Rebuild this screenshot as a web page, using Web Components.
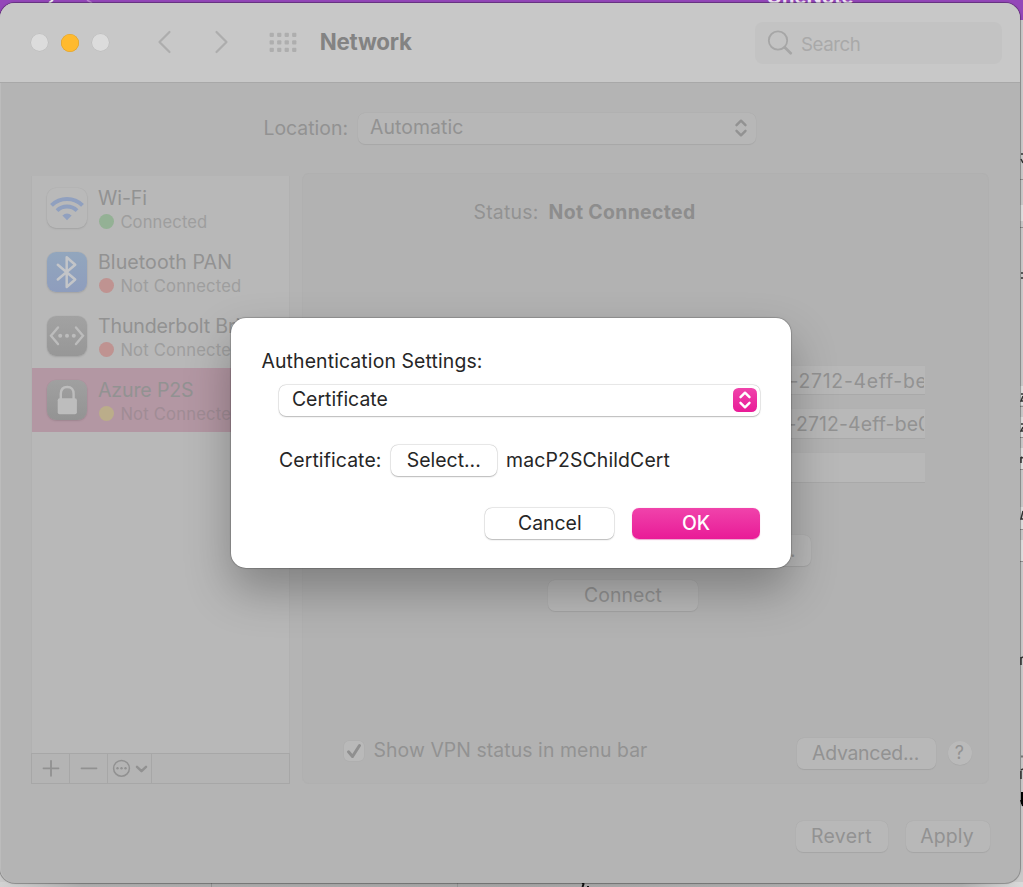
<!DOCTYPE html>
<html lang="en">
<head>
<meta charset="utf-8">
<title>Network</title>
<style>
html,body{margin:0;height:100%;overflow:hidden;background:#c9c9c9}
body{font-family:Inter,"Liberation Sans",sans-serif;font-size:19.4px;color:#929292}
</style>
</head>
<body>
<network-app></network-app>
<script>
const define = (name, html, setup) => customElements.define(name, class extends HTMLElement {
  connectedCallback() {
    if (this.shadowRoot) return;
    const t = document.createElement('template');
    t.innerHTML = html;
    this.attachShadow({mode: 'open'}).append(t.content.cloneNode(true));
    if (setup) setup.call(this, this.shadowRoot);
  }
});

/* A single line of text tracked to an exact width. */
define('ui-text', `<style>
:host{display:block;flex:none;white-space:nowrap;line-height:26px;height:26px}
span{display:inline-block;margin-left:.5px}
</style><span></span>`, function (root) {
  const s = root.querySelector('span'), text = this.getAttribute('text'), w = +this.getAttribute('w');
  s.textContent = text;
  if (this.hasAttribute('size')) this.style.fontSize = this.getAttribute('size') + 'px';
  if (this.hasAttribute('weight')) this.style.fontWeight = this.getAttribute('weight');
  this.style.width = w + 'px';
  s.style.letterSpacing = ((w - 1 - s.getBoundingClientRect().width) / text.length) + 'px';
});

define('ui-button', `<style>
:host{display:flex;flex:none;box-sizing:border-box;height:31px;border-radius:7px;align-items:center;justify-content:center;padding-bottom:.5px;
background:#b8b8b8;box-shadow:0 0 0 .5px rgba(0,0,0,.02),0 .7px 1px rgba(0,0,0,.07)}
:host([kind=white]){background:#fff;box-shadow:0 0 0 .6px rgba(0,0,0,.1),0 .8px 1.5px rgba(0,0,0,.24)}
:host([kind=primary]){background:linear-gradient(#f043ab,#e91b97);color:#fff;box-shadow:0 .5px 1px rgba(200,0,120,.35)}
</style><slot></slot>`);

define('ui-select', `<style>
:host{display:flex;flex:none;box-sizing:border-box;height:31px;border-radius:7px;align-items:center;justify-content:space-between;padding:0 3px 0 12px;
background:#b7b7b7;box-shadow:0 0 0 .5px rgba(0,0,0,.02),0 .7px 1px rgba(0,0,0,.06)}
:host([kind=white]){background:#fff;box-shadow:0 0 0 .6px rgba(0,0,0,.1),0 .8px 1.5px rgba(0,0,0,.24)}
i{display:block;width:24px;height:24px;border-radius:5.5px}
:host([kind=white]) i{background:linear-gradient(#f043ab,#e91b97);color:#fff}
slot{display:block;margin-top:-2px}
svg{display:block}
</style><slot></slot><i><svg width="24" height="24" fill="none" stroke="currentColor" stroke-width="2.4" stroke-linecap="round" stroke-linejoin="round"><path d="M7.500 9.200 12 4.700l4.500 4.500M7.500 14.800 12 19.300l4.500-4.500"/></svg></i>`);

define('title-bar', `<style>
:host{display:flex;flex:none;height:79px;box-sizing:border-box;background:#c8c8c8;align-items:center;padding:0 18.500px 0 31px;border-radius:15px 15px 0 0}
b{width:17px;height:17px;border-radius:50%;background:#dcdcdc;margin-right:13.500px;box-shadow:0 0 0 .5px rgba(0,0,0,.07)}
b.y{width:18px;height:18px;margin:0 13px 0 -.3px;background:#ffba2e;box-shadow:inset 0 0 0 .6px #dba02f}
svg{display:block;flex:none}
.s{display:flex;align-items:center;width:247px;height:42px;box-sizing:border-box;border-radius:8px;background:#c3c3c3;margin-left:auto;padding:1px 0 0 13px;color:#a9a9a9}
</style>
<b></b><b class="y"></b><b></b>
<svg style="margin-left:24.500px" width="200" height="32" fill="none"><g stroke="#adadad" stroke-width="2.200" stroke-linecap="round" stroke-linejoin="round"><path d="M22.500 5 12.500 15l10 10M69.500 5l10 10-10 10"/></g>
<g id="d" fill="#aeaeae"></g></svg>
<ui-text style="margin:-1px 0 0 -28px;color:#838383" text="Network" w="93" size="22.300" weight="700"></ui-text>
<div class="s"><svg style="margin-left:-.5px" width="26" height="28" fill="none" stroke="#a6a6a6"><circle cx="11" cy="11.500" r="9.200" stroke-width="1.800"/><path d="m17.700 18.200 6 6" stroke-width="2.700" stroke-linecap="round"/></svg><ui-text style="margin:4px 0 0 7.500px" text="Search" w="60.500" size="18.700"></ui-text></div>`, function (root) {
  let s = '';
  for (let y = 0; y < 3; y++) for (let x = 0; x < 4; x++)
    s += `<rect x="${122.600 + x * 7.500}" y="${5.700 + y * 7.500}" width="4.300" height="4.300" rx="1"/>`;
  root.getElementById('d').innerHTML = s;
});

const glyphs = {
  wifi: ['#b9b9b9', '<g fill="none" stroke="#90a0bf" stroke-width="4"><path d="M4.500 17.300a22 22 0 0 1 31 0M10 22.600a14.500 14.500 0 0 1 20 0"/></g><path d="m20 32.300-4.600-4.700q4.600-4 9.200 0z" fill="#90a0bf"/>'],
  bt: ['linear-gradient(#92a6bd,#8e9dbd)', '<path d="m10.800 12.800 17.400 14.700L19.700 35V5.300l8.500 7.500L10.800 27.500" fill="none" stroke="#c3c5c8" stroke-width="2.500" stroke-linejoin="round" stroke-linecap="round"/>'],
  tb: ['linear-gradient(#a2a2a2,#979797)', '<path d="m11 11.500-7 8.300 7 8.300M29 11.500l7 8.300-7 8.300" fill="none" stroke="#bcbcbc" stroke-width="2.400" stroke-linecap="round"/><g fill="#bcbcbc"><circle cx="13.200" cy="19.800" r="2"/><circle cx="20" cy="19.800" r="2"/><circle cx="26.800" cy="19.800" r="2"/></g>'],
  vpn: ['linear-gradient(#a0a0a0,#939393)', '<rect x="10.700" y="18.300" width="19.200" height="16" rx="2" fill="#bdbdbd"/><path d="M13.800 19v-5.200q0-6.800 6.400-6.800t6.400 6.800V19" fill="none" stroke="#bdbdbd" stroke-width="2.400"/>']
};
define('service-row', `<style>
:host{display:flex;flex:none;height:64px;box-sizing:border-box;padding:12px 0 0 15.300px;overflow:hidden}
:host([selected]){background:#b397a3}
i{display:block;flex:none;width:40px;height:40px;border-radius:9px;box-shadow:0 0 0 .5px rgba(0,0,0,.03),0 1px 2px rgba(0,0,0,.1)}
svg{display:block}
.t{margin:-3px 0 0 10.200px}
.s{display:flex;align-items:center;height:24px;margin-top:-1px;color:#9e9e9e}
:host([selected]) .s{color:#a08c95}
.s u{width:15.400px;height:15.400px;border-radius:50%;margin:-1px 5.500px 0 1.500px;flex:none}
</style><i></i><div class="t"></div>`, function (root) {
  const [bg, svg] = glyphs[this.getAttribute('icon')], g = n => this.getAttribute(n);
  const i = root.querySelector('i');
  i.style.background = bg;
  i.innerHTML = `<svg width="40" height="40">${svg}</svg>`;
  root.querySelector('.t').innerHTML = `<ui-text text="${g('name')}" w="${g('w')}" size="19.600"></ui-text><div class="s"><u style="background:${g('dot')}"></u><ui-text text="${g('status')}" w="${g('sw')}" size="16.600"></ui-text></div>`;
});

define('service-list', `<style>
:host{display:flex;flex-direction:column;width:259px;box-sizing:border-box;padding-top:3px}
.l{flex:1;background:#b8b8b8;border-left:1px solid #b1b1b1;border-right:1px solid #b1b1b1;box-sizing:border-box}
.b{display:flex;height:31px;box-sizing:border-box;border:1.500px solid #a7a7a7;color:#919191}
.b span{box-sizing:border-box;border-right:1px solid #a7a7a7;height:100%}
svg{display:block}
</style>
<div class="l">
<service-row icon="wifi" name="Wi-Fi" w="50" status="Connected" sw="88" dot="#94b195"></service-row>
<service-row icon="bt" name="Bluetooth PAN" w="135" status="Not Connected" sw="122" dot="#bf9391"></service-row>
<service-row icon="tb" name="Thunderbolt Bridge" w="178" status="Not Connected" sw="122" dot="#bf9391"></service-row>
<service-row selected icon="vpn" name="Azure P2S" w="96.500" status="Not Connected" sw="122" dot="#bbad8a"></service-row>
</div>
<div class="b">
<span style="width:37.500px"><svg width="36" height="28" stroke="currentColor" stroke-width="1.800" stroke-linecap="round"><path d="M11.500 14.300h15M19 6.800v15"/></svg></span>
<span style="width:38px"><svg width="37" height="28" stroke="currentColor" stroke-width="1.800" stroke-linecap="round"><path d="M11.500 14.300h15"/></svg></span>
<span style="width:44.500px"><svg width="43" height="28" fill="none" stroke="currentColor" stroke-linecap="round" stroke-linejoin="round"><circle cx="13.500" cy="14.300" r="7.900" stroke-width="1.500"/><path d="M29 12.800l4.500 4.300 4.500-4.300" stroke-width="2.500"/><g fill="currentColor" stroke="none"><circle cx="9.500" cy="14.300" r="1.200"/><circle cx="13.500" cy="14.300" r="1.200"/><circle cx="17.500" cy="14.300" r="1.200"/></g></svg></span>
</div>`);

define('text-field', `<style>
:host{display:block;flex:none;width:369px;height:29.500px;box-sizing:border-box;background:#b8b8b8;border-bottom:1px solid #a9a9a9;overflow:hidden;padding:2px 1px 0 0;box-shadow:0 -.5px #b0b0b0}
div{height:26px;overflow:hidden}
</style><div><slot></slot></div>`);

define('service-panel', `<style>
:host{display:flex;flex-direction:column;background:#b2b2b2;border-radius:7px;width:687px;box-sizing:border-box;box-shadow:inset 0 0 0 1px #b0b0b0}
.st{display:flex;margin:25.500px 0 0 171px;gap:9px}
.f{display:flex;flex-direction:column;gap:14.300px;margin:141px 0 0 254px}
.bot{display:flex;align-items:center;margin:auto 17px 15.500px 42px}
.c{width:20px;height:20px;border-radius:5px;background:#b9b9b9;margin:-5px 9px 0 0;box-shadow:0 0 0 .6px rgba(0,0,0,.03)}
.q{width:24px;height:24px;border-radius:50%;background:#bababa;display:flex;justify-content:center;align-items:center;margin-left:12.500px;box-shadow:0 .5px 1px rgba(0,0,0,.07)}
svg{display:block}
</style>
<div class="st"><ui-text text="Status:" w="66"></ui-text><ui-text text="Not Connected" w="148" weight="700" style="color:#8d8d8d"></ui-text></div>
<div class="f">
<text-field><ui-text text="-2712-4eff-be0" w="152" style="margin:.5px 0 0 233px"></ui-text></text-field>
<text-field><ui-text text="-2712-4eff-be0" w="144" style="margin-left:231px"></ui-text></text-field>
<text-field></text-field>
</div>
<ui-button style="width:256px;margin:52.600px 0 0 253px;justify-content:flex-end;padding-right:15px;box-sizing:border-box"><ui-text text="Authentication Settings..." w="226"></ui-text></ui-button>
<ui-button style="width:150px;margin:13.500px 0 0 246px"><ui-text text="Connect" w="79"></ui-text></ui-button>
<div class="bot"><div class="c"><svg width="20" height="20" fill="none" stroke="#8f8f8f" stroke-width="3" stroke-linecap="round" stroke-linejoin="round"><path d="m4.500 10.800 4 4.700 7-11"/></svg></div>
<ui-text text="Show VPN status in menu bar" w="275" style="margin-top:-5.500px"></ui-text>
<ui-button style="width:139px;margin-left:auto"><ui-text text="Advanced..." w="108" style="margin-left:-1px"></ui-text></ui-button>
<div class="q"><ui-text text="?" w="11.500" size="18"></ui-text></div></div>`);

define('auth-dialog', `<style>
:host{position:absolute;left:231px;top:315px;width:560px;height:250px;box-sizing:border-box;border-radius:15px;background:#fff;color:#262626;
display:flex;flex-direction:column;padding:30px 30.700px 29px 30px;box-shadow:0 0 0 .7px rgba(0,0,0,.14),0 0 2px rgba(0,0,0,.25),0 22px 46px rgba(0,0,0,.29)}
.r{display:flex;align-items:center}
</style>
<ui-text text="Authentication Settings:" w="222"></ui-text>
<ui-select kind="white" style="margin:10.600px 0 0 18.400px"><ui-text text="Certificate" w="97"></ui-text></ui-select>
<div class="r" style="margin:29.800px 0 0 17.500px"><ui-text text="Certificate:" w="103.500" style="margin-top:-1px"></ui-text><ui-button kind="white" style="width:106px;margin:0 8.300px 0 9.300px"><ui-text text="Select..." w="75" style="margin:-1.500px 0 0 -1px"></ui-text></ui-button><ui-text text="macP2SChildCert" w="165" style="margin-top:-1px"></ui-text></div>
<div class="r" style="justify-content:flex-end;gap:17.500px;margin-top:auto"><ui-button kind="white" style="width:129px"><ui-text text="Cancel" w="64.500" style="margin-top:-.5px"></ui-text></ui-button><ui-button kind="primary" style="width:128.500px"><ui-text text="OK" w="29" weight="500" style="margin-top:-.5px"></ui-text></ui-button></div>`);

/* The other windows that show around the edges. */
define('desk-backdrop', `<style>
:host{position:absolute;inset:0;overflow:hidden;background:#c9c9c9}
.p{height:20px;background:#9447b9}
svg{position:absolute;left:0;top:0}
ui-text{position:absolute;left:766px;top:-16px;color:#f0e4f5}
.b{position:absolute;left:0;right:0;bottom:0;height:5px;background:linear-gradient(90deg,#d2d2d2,#adadad 8%,#a3a3a3 50%,#b0b0b0 94%,#dadada)}
</style><div class="p"></div><div class="b"></div>
<svg width="1023" height="887"><path d="m53 0-4 3" stroke="#eee" stroke-width="2"/><path d="m87 0 5 3" stroke="#b981d0" stroke-width="1.500"/>
<path d="M1020 205h3v16h-3zM1020 386h3v19h-3zM1020 417h3v20h-3zM1020 448h3v21h-3zM1020 507h3v22h-3zM1020 540h3v21h-3z" fill="#dedede"/>
<path d="M1020 179.500h3M1020 227.500h3M1020 406.500h3M1020 437.500h3M1020 469.500h3M1020 529.500h3M1020 561.500h3M211.500 882v5M457.500 882v5" stroke="#929292"/>
<path d="M1021 154h2M1021 159l2 4M1021 273h2m-2 5h2M1021 394h2m0 2-2 5h2M1021 424h2m0 3-2 4h2M1021 457v6m0-6 2 1M1023 511l-2 8h2M1021 657v8m0-7 2-1M1021 771v8m0-9 2-1" fill="none" stroke="#333" stroke-width="1.500"/><path d="M1021 756.500h2" stroke="#777" stroke-width="2"/><path d="M1022 792v12m-1-4 2 6" stroke="#000" stroke-width="2"/><path d="m582 882 1.500 2-1 3M588 886v1" stroke="#111" stroke-width="2" fill="none"/></svg>
<ui-text text="OneNote" w="88" size="20" weight="700"></ui-text>`);

define('network-window', `<style>
:host{position:absolute;left:0;top:3px;width:1020px;height:879.500px;background:#b4b4b4;border-radius:15px;display:flex;flex-direction:column;box-shadow:inset 1px 0 #bcbcbc,0 0 0 1px rgba(0,0,0,.24),0 0 3px rgba(0,0,0,.2)}
.line{height:1px;background:#a8a8a8;flex:none}
.loc{display:flex;align-items:center;margin:29.500px 0 0 263px;gap:9px}
.main{display:flex;height:611px;gap:12px;margin:29.500px 0 0 31px}
.foot{display:flex;justify-content:flex-end;gap:18px;margin:37px 30.500px 0 0}
</style>
<title-bar></title-bar><div class="line"></div>
<div class="loc"><ui-text text="Location:" w="85.500" style="margin-top:-1px"></ui-text><ui-select style="width:398px"><ui-text text="Automatic" w="94.500"></ui-text></ui-select></div>
<div class="main"><service-list></service-list><service-panel></service-panel></div>
<div class="foot"><ui-button style="width:92px"><ui-text text="Revert" w="62"></ui-text></ui-button><ui-button style="width:84px"><ui-text text="Apply" w="54.500" style="margin-left:-1px"></ui-text></ui-button></div>
<auth-dialog></auth-dialog>`);

define('network-app', `<style>:host{display:block;position:relative;width:1023px;height:887px;overflow:hidden}</style>
<desk-backdrop></desk-backdrop><network-window></network-window>`);
</script>
</body>
</html>
